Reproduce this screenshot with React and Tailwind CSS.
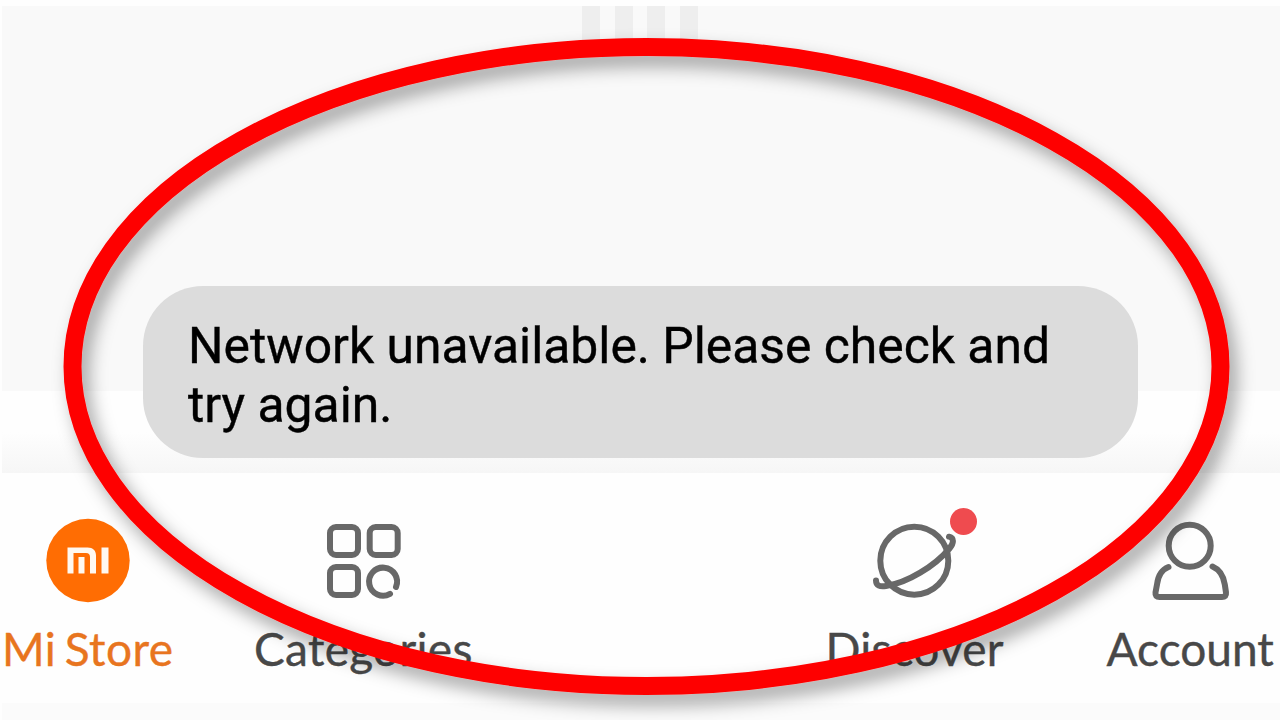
import React from 'react';

const StoreIcon = () => (
  <svg viewBox="0 0 100 100" className="w-[100px] h-[100px]">
    <circle cx="50" cy="50.5" r="41.7" fill="#ff6d03" />
    <g fill="#fff8f0">
      <path d="M29.5 37.5h20c5.5 0 8.5 3 8.5 8v18h-6V47c0-2.7-1.3-4-4-4H35.5v20.5h-6z" />
      <rect x="40.5" y="47" width="6" height="16.5" />
      <rect x="63.5" y="37.5" width="7" height="26" />
    </g>
  </svg>
);

const CategoriesIcon = () => (
  <svg viewBox="0 0 100 100" className="w-[100px] h-[100px]" fill="none" stroke="#686868" strokeWidth="6">
    <rect x="17" y="17" width="28" height="28" rx="6" />
    <rect x="56.7" y="17" width="28" height="28" rx="6" />
    <rect x="17" y="57" width="28" height="28" rx="6" />
    <path d="M77 83.8A14 14 0 1 1 83 77" strokeLinecap="round" />
  </svg>
);

const DiscoverIcon = () => (
  <svg viewBox="0 0 100 100" className="w-[100px] h-[100px]" fill="none" stroke="#686868" strokeWidth="6" strokeLinecap="round">
    <circle cx="49.3" cy="50.7" r="34" />
    <path d="M11 70.5c0 5.5 4 6.300 10 5.500C42 73 70 56 84.500 38.500c4.500-5.500 4.800-10.500-.5-11.800" />
  </svg>
);

const AccountIcon = () => (
  <svg viewBox="0 0 100 100" className="w-[100px] h-[100px]" fill="none" stroke="#686868" strokeWidth="6" strokeLinecap="round">
    <circle cx="49.7" cy="35.7" r="21" />
    <path d="M28.5 57c-6.500 2.500-10.500 9-11.500 17.500l-1.500 8c-.4 3 1 4.500 4 4.500h62.500c3 0 4.400-1.500 4-4.500l-1.200-8C83.500 66 79.500 59.500 72.500 56.500" />
  </svg>
);

const tabs = [
  { label: 'Mi Store', icon: StoreIcon, color: 'text-[#e8751f]', spacing: 'tracking-[0.5px] [word-spacing:-4px]' },
  { label: 'Categories', icon: CategoriesIcon, color: 'text-[#484848]', spacing: 'tracking-[0.3px]' },
  null,
  { label: 'Discover', icon: DiscoverIcon, color: 'text-[#484848]', spacing: 'tracking-[0.2px]', badge: true },
  { label: 'Account', icon: AccountIcon, color: 'text-[#484848]', spacing: '' }
];

const App = () => {
  return (
    <div className="relative w-[1280px] h-[720px] overflow-hidden bg-[#fefefe] pt-1.5 pl-0.5 flex flex-col">
      {/* Page content */}
      <main className="h-[385px] shrink-0 bg-[#f9f9f9]">
        <div className="flex gap-[14.5px] ml-[580px]">
          {[0, 1, 2, 3].map((stripe) => (
            <div key={stripe} className="w-[18px] h-[38px] bg-[#eeeeee]" />
          ))}
        </div>
      </main>
      <div className="h-[82px] shrink-0 bg-linear-to-b from-[#fefefe] from-50% to-[#f6f6f6]" />

      {/* Bottom tabs */}
      <nav className="h-[230px] shrink-0 w-[1378px] -ml-[52px] pt-[37px] grid grid-cols-5 bg-[#fefefe]">
        {tabs.map((tab, idx) =>
          tab ? (
            <div key={idx} className="flex flex-col items-center">
              <div className="relative">
                <tab.icon />
                {tab.badge && (
                  <span className="absolute -top-[2px] left-[85px] w-[27px] h-[27px] rounded-full bg-[#ef4b4f]" />
                )}
              </div>
              <span
                className={`mt-[11px] font-[Lato,sans-serif] text-[46px] leading-[56px] whitespace-nowrap [-webkit-text-stroke:0.4px] ${tab.color} ${tab.spacing}`}
              >
                {tab.label}
              </span>
            </div>
          ) : (
            <div key={idx} />
          )
        )}
      </nav>
      <div className="grow bg-[#fbfbfb]" />

      {/* Toast */}
      <div className="absolute left-[143px] top-[286px] w-[995px] h-[172px] rounded-[60px] bg-[#dcdcdc] pl-[45px] pt-[31px] font-[Roboto,sans-serif] text-[49.8px] leading-[59px] text-black whitespace-nowrap [-webkit-text-stroke:0.4px]">
        <p>Network unavailable. Please check and</p>
        <p>try again.</p>
      </div>

      {/* Highlight ring */}
      <svg viewBox="0 0 1280 720" className="absolute inset-0 w-full h-full pointer-events-none">
        <defs>
          <filter id="ring-shadow" x="-10%" y="-10%" width="120%" height="120%">
            <feDropShadow dx="7" dy="10" stdDeviation="9" floodColor="#000" floodOpacity="0.36" />
          </filter>
        </defs>
        <ellipse
          cx="646.5"
          cy="366.5"
          rx="574"
          ry="319.5"
          fill="none"
          stroke="#fe0000"
          strokeWidth="18"
          filter="url(#ring-shadow)"
        />
      </svg>
    </div>
  );
};

export default App;
